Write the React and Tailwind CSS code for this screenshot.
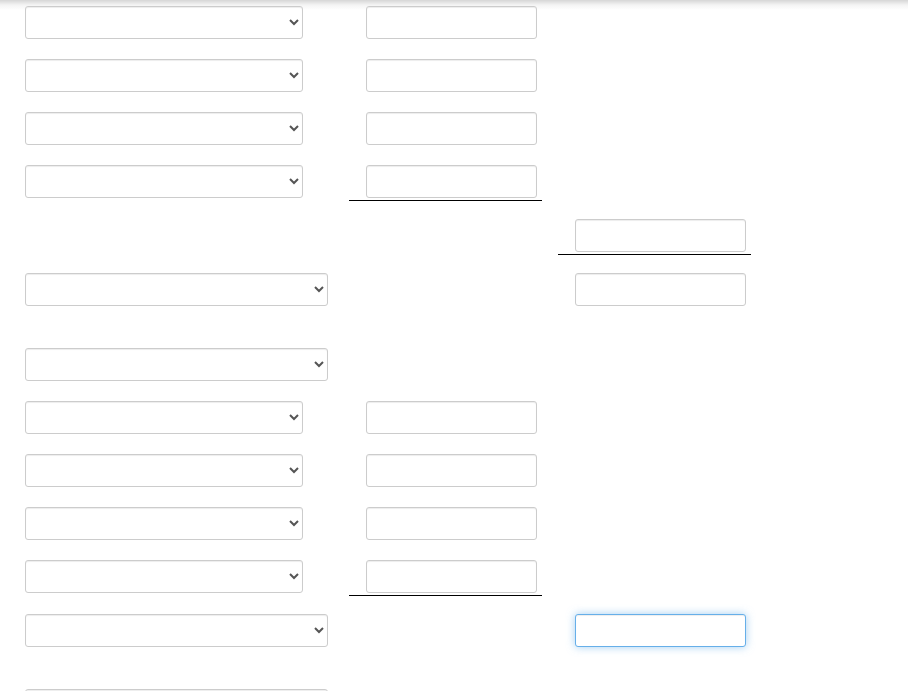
import React from "react";

const field = "block h-[33px] border rounded-[3px] bg-white outline-none";
const idle = "border-[#cccccc] shadow-[inset_0_1px_1px_rgba(0,0,0,0.075)]";
const active =
  "border-[#66afe9] shadow-[inset_0_1px_1px_rgba(0,0,0,0.075),0_0_8px_rgba(102,175,233,0.6)]";

const rows = [
  { sel: "narrow", mid: true },
  { sel: "narrow", mid: true },
  { sel: "narrow", mid: true },
  { sel: "narrow", mid: true, midLine: true },
  { right: true, rightLine: true },
  { sel: "wide", right: true, gapAfter: true },
  { sel: "wide" },
  { sel: "narrow", mid: true },
  { sel: "narrow", mid: true },
  { sel: "narrow", mid: true },
  { sel: "narrow", mid: true, midLine: true },
  { sel: "wide", right: true, focused: true, gapAfter: true },
  { sel: "wide" },
];

function Select({ wide }) {
  return (
    <select className={`${field} ${idle} ${wide ? "w-[303px]" : "w-[278px]"} px-2 text-sm text-[#555] font-['Liberation_Sans',sans-serif]`}>
      <option value=""></option>
    </select>
  );
}

function Input({ focused }) {
  return <input type="text" className={`${field} ${focused ? active : idle} ml-[17px] w-[171px] px-3`} />;
}

export default function App() {
  return (
    <div className="min-h-[691px] bg-[linear-gradient(to_bottom,#d6d6d6,#f4f4f4_5px,#ffffff_10px)] pl-[25px] pt-[6px] overflow-hidden">
      {rows.map((r, i) => {
        const lined = r.midLine || r.rightLine;
        const mb = r.gapAfter ? "mb-[42px]" : lined ? "mb-[18px]" : "mb-5";
        return (
          <div key={i} className={`grid grid-cols-[308px_193px_193px] gap-x-4 items-start ${mb}`}>
            <div>{r.sel && <Select wide={r.sel === "wide"} />}</div>
            <div className={r.midLine ? "border-b border-black pb-[2px]" : ""}>
              {r.mid && <Input />}
            </div>
            <div className={r.rightLine ? "border-b border-black pb-[2px]" : ""}>
              {r.right && <Input focused={r.focused} />}
            </div>
          </div>
        );
      })}
    </div>
  );
}
